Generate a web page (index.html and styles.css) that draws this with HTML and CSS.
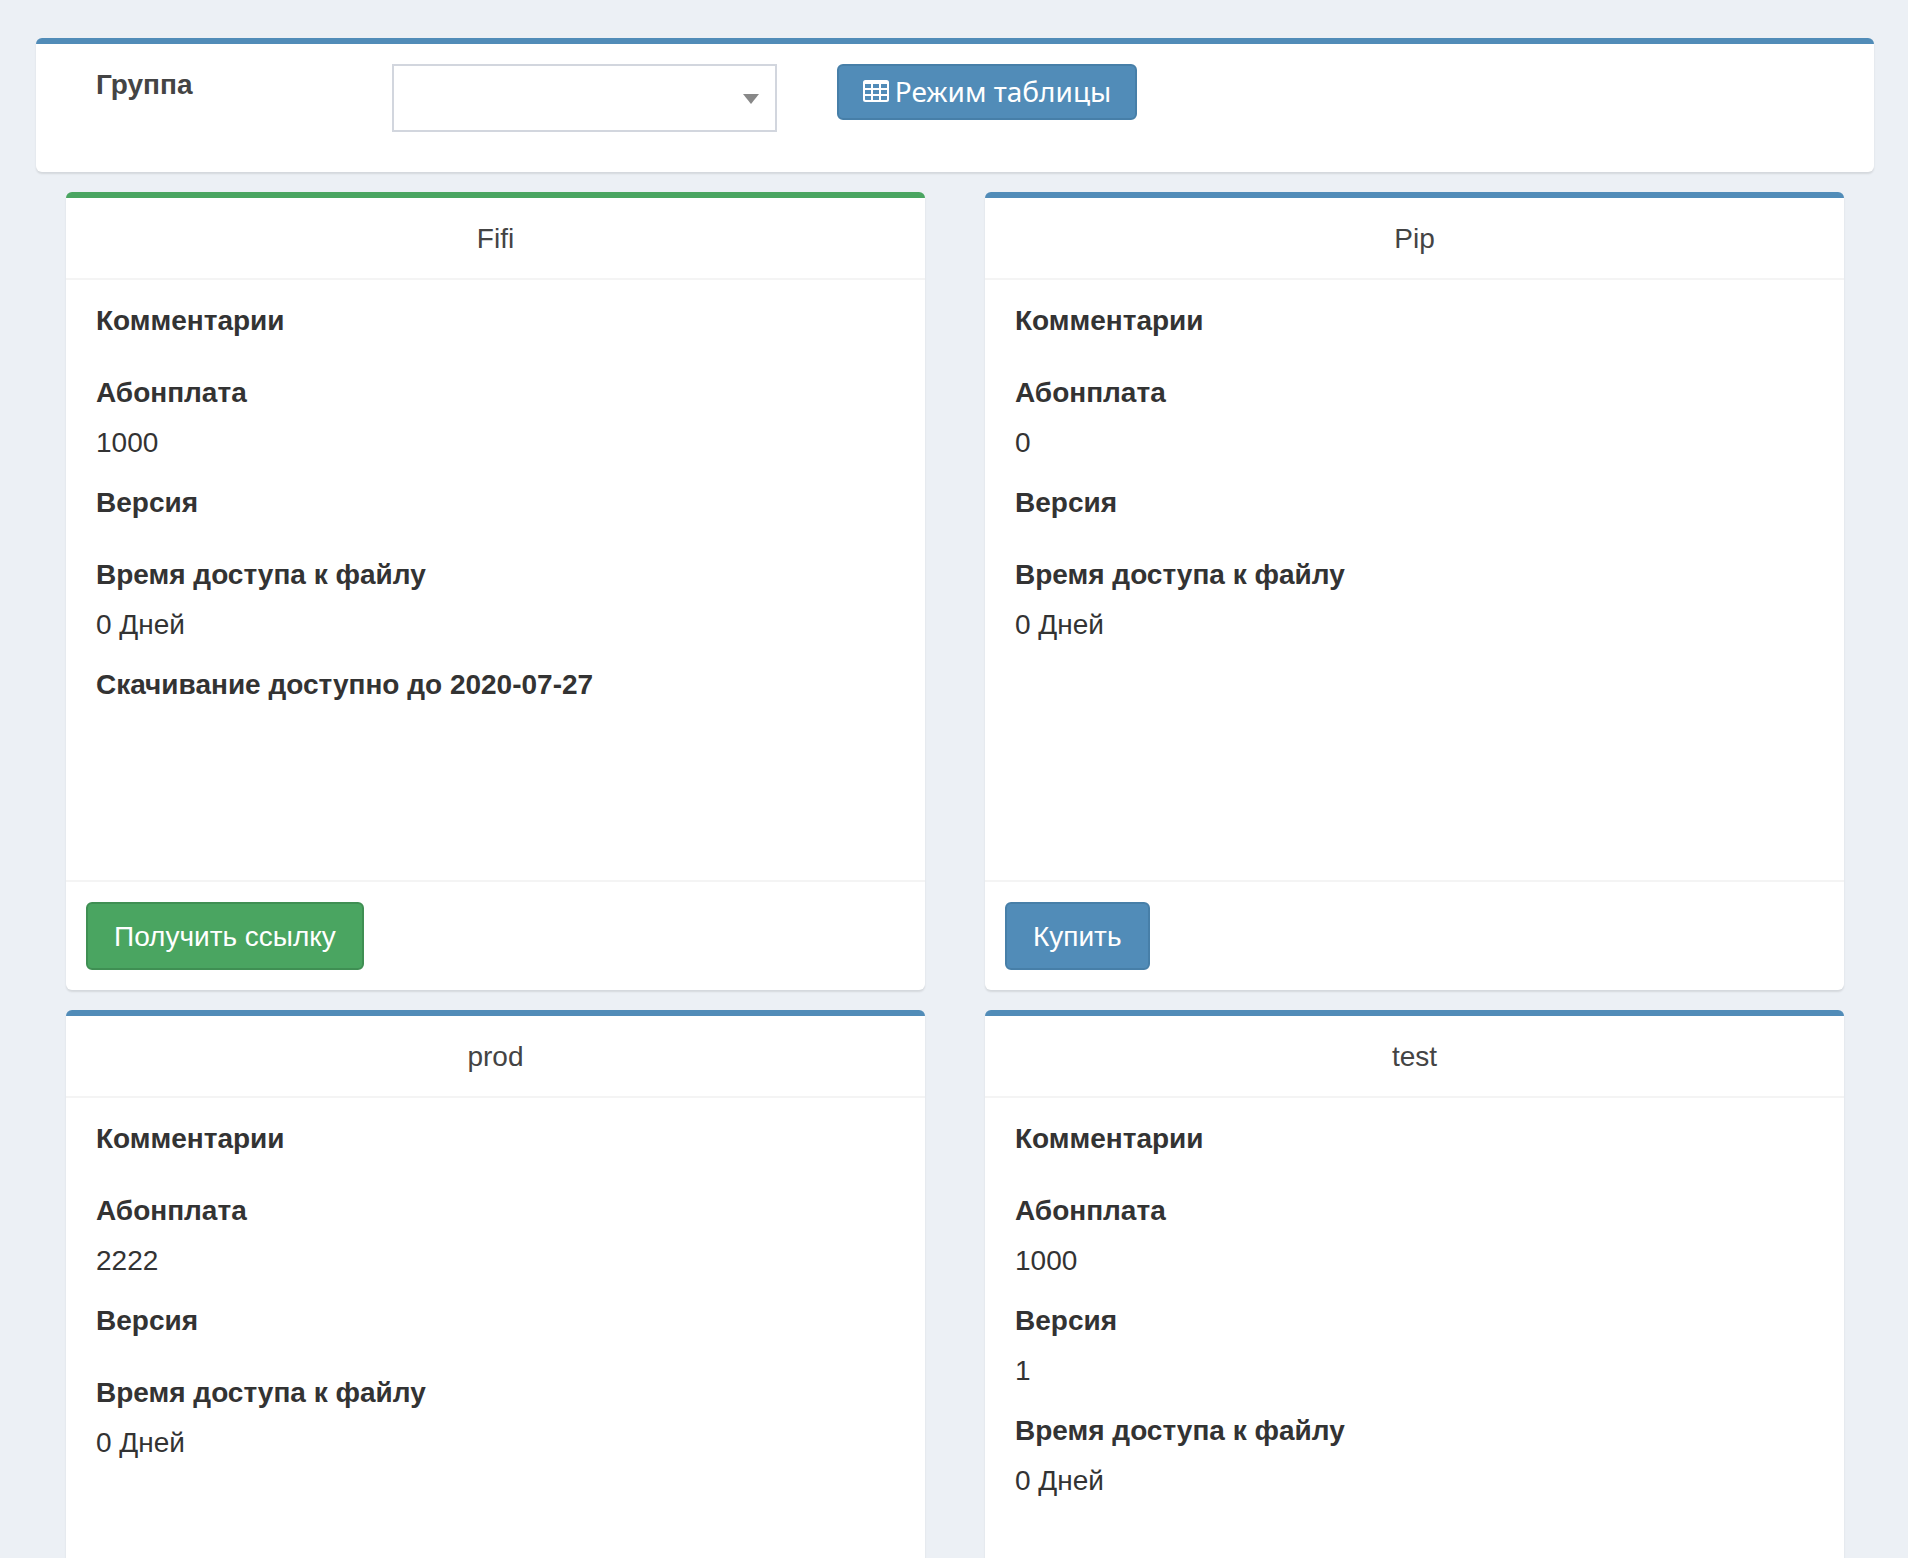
FILE: index.html
```html
<!DOCTYPE html>
<html lang="ru">
<head>
<meta charset="utf-8">
<title>Группа</title>
<meta name="viewport" content="width=device-width, initial-scale=1">
<link rel="stylesheet" href="styles.css">
</head>
<body>
<main class="content">
  <form class="box filter">
    <label class="filter-label" for="group">Группа</label>
    <div class="filter-field">
      <select class="select" id="group"><option value=""></option></select>
      <svg class="select-arrow" viewBox="0 0 16 10" aria-hidden="true"><path d="M0 0h16L8 10z"/></svg>
    </div>
    <div class="filter-action">
      <button class="btn btn-primary btn-mode" type="button">
        <svg class="icon" viewBox="0 0 26 22" aria-hidden="true"><path fill-rule="evenodd" d="M2.500 0h21A2.500 2.500 0 0 1 26 2.500v17a2.500 2.500 0 0 1-2.500 2.500h-21A2.500 2.500 0 0 1 0 19.500v-17A2.500 2.500 0 0 1 2.500 0zM2 4v4h6V4zM10 4v4h6V4zM18 4v4h6V4zM2 10v4h6v-4zM10 10v4h6v-4zM18 10v4h6v-4zM2 16v3.500l.5.5H8v-4zM10 16v4h6v-4zM18 16v4h5.500l.5-.5V16z"/></svg>
        <span>Режим таблицы</span>
      </button>
    </div>
  </form>

  <div class="cards">
    <section class="box card box-success">
      <h3 class="card-title">Fifi</h3>
      <dl class="card-body">
        <dt>Комментарии</dt><dd></dd>
        <dt>Абонплата</dt><dd>1000</dd>
        <dt>Версия</dt><dd></dd>
        <dt>Время доступа к файлу</dt><dd>0 Дней</dd>
        <dt>Скачивание доступно до 2020-07-27</dt><dd></dd>
      </dl>
      <div class="card-footer"><button class="btn btn-success" type="button">Получить ссылку</button></div>
    </section>

    <section class="box card">
      <h3 class="card-title">Pip</h3>
      <dl class="card-body">
        <dt>Комментарии</dt><dd></dd>
        <dt>Абонплата</dt><dd>0</dd>
        <dt>Версия</dt><dd></dd>
        <dt>Время доступа к файлу</dt><dd>0 Дней</dd>
      </dl>
      <div class="card-footer"><button class="btn btn-primary" type="button">Купить</button></div>
    </section>

    <section class="box card">
      <h3 class="card-title">prod</h3>
      <dl class="card-body">
        <dt>Комментарии</dt><dd></dd>
        <dt>Абонплата</dt><dd>2222</dd>
        <dt>Версия</dt><dd></dd>
        <dt>Время доступа к файлу</dt><dd>0 Дней</dd>
      </dl>
    </section>

    <section class="box card">
      <h3 class="card-title">test</h3>
      <dl class="card-body">
        <dt>Комментарии</dt><dd></dd>
        <dt>Абонплата</dt><dd>1000</dd>
        <dt>Версия</dt><dd>1</dd>
        <dt>Время доступа к файлу</dt><dd>0 Дней</dd>
      </dl>
    </section>
  </div>
</main>
</body>
</html>
```
FILE: styles.css
```css
* {
  box-sizing: border-box;
}

body {
  margin: 0;
  background: #ecf0f5;
  color: #333;
  font: 28px/40px "Liberation Sans", Arial, sans-serif;
}

.content {
  padding: 38px 34px 20px 36px;
}

.box {
  background: #fff;
  border-top: 6px solid #518cb8;
  border-radius: 6px;
  box-shadow: 0 2px 2px rgba(0, 0, 0, 0.1);
}

.box-success {
  border-top-color: #4aa561;
}

/* Filter bar: two, three and seven of twelve columns */
.filter {
  display: grid;
  grid-template-columns: 2fr 3fr 7fr;
  align-items: start;
  margin-bottom: 20px;
  padding: 20px 30px 40px;
}

.filter-label {
  padding: 1px 30px 0;
  color: #444;
  font-weight: 700;
}

.filter-field {
  position: relative;
  padding: 0 30px;
}

.filter-action {
  display: flex;
  padding: 0 30px;
}

.select {
  appearance: none;
  display: block;
  width: 100%;
  height: 68px;
  padding: 12px 48px 12px 24px;
  border: 2px solid #d2d6de;
  border-radius: 0;
  background: #fff;
  color: #444;
  font: inherit;
}

.select-arrow {
  position: absolute;
  top: 30px;
  right: 48px;
  width: 16px;
  height: 10px;
  fill: #888;
  pointer-events: none;
}

.btn {
  display: inline-flex;
  align-items: center;
  gap: 6px;
  padding: 13px 26px 11px;
  border: 2px solid;
  border-radius: 6px;
  color: #fff;
  font: inherit;
  white-space: nowrap;
  cursor: pointer;
}

.btn-primary {
  background: #518cb8;
  border-color: #477fa8;
}

.btn-success {
  background: #4aa561;
  border-color: #3f8f53;
}

.btn-mode {
  padding: 5px 24px 7px;
  font-family: "Noto Sans", "Open Sans", sans-serif;
}

.icon {
  width: 26px;
  height: 22px;
  fill: currentColor;
}

.cards {
  display: grid;
  grid-template-columns: 1fr 1fr;
  gap: 20px 60px;
  padding: 0 30px;
}

.card {
  display: flex;
  flex-direction: column;
}

.card-title {
  margin: 0;
  padding: 21px 20px 19px;
  border-bottom: 2px solid #f4f4f4;
  color: #444;
  font-size: 28px;
  font-weight: 400;
  text-align: center;
}

.card-body {
  min-height: 600px;
  margin: 0;
  padding: 21px 30px 19px;
}

.card-body dt {
  font-weight: 700;
}

.card-body dd {
  min-height: 2px;
  margin: 10px 0 20px;
}

.card-footer {
  display: flex;
  padding: 20px;
  border-top: 2px solid #f4f4f4;
}
```
